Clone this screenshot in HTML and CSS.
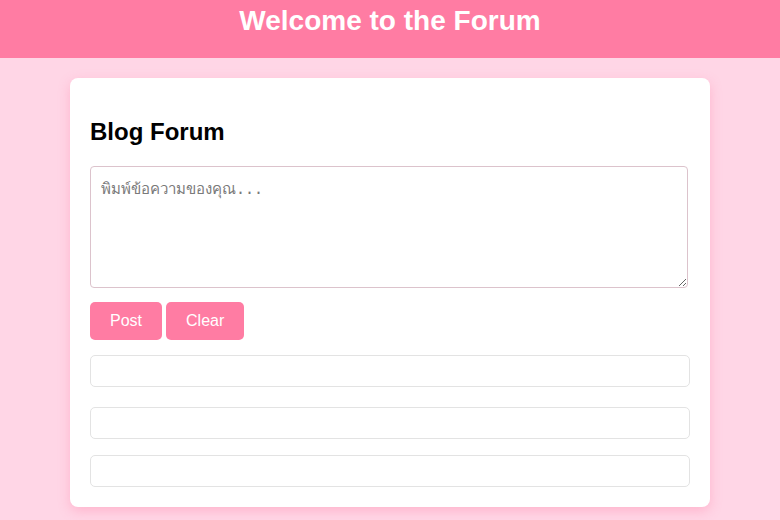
FILE: index.html
```html
<!DOCTYPE html>
<html lang="th">
<head>
<meta charset="utf-8">
<title>Forum</title>
<link rel="stylesheet" href="styles.css">
</head>
<body>
<header class="site-header">
  <h1 class="site-title">Welcome to the Forum</h1>
</header>
<main class="card">
  <h2 class="card-title">Blog Forum</h2>
  <textarea class="message" placeholder="พิมพ์ข้อความของคุณ..."></textarea>
  <div class="actions">
    <button class="btn">Post</button>
    <button class="btn">Clear</button>
  </div>
  <div class="posts">
    <div class="post post-first"></div>
    <div class="post post-second"></div>
    <div class="post post-third"></div>
  </div>
</main>
</body>
</html>
```

FILE: styles.css
```css
html, body {
  margin: 0;
  padding: 0;
}
body {
  background: #ffd6e6;
  font-family: "Liberation Sans", Arial, sans-serif;
  height: 520px;
  overflow: hidden;
}
.site-header {
  background: #ff7ca3;
  height: 58px;
  box-sizing: border-box;
  padding-top: 5px;
  text-align: center;
}
.site-title {
  margin: 0;
  color: #ffffff;
  font-size: 28px;
  line-height: 32px;
  font-weight: bold;
}
.card {
  display: block;
  width: 640px;
  box-sizing: border-box;
  margin: 20px auto 0;
  background: #ffffff;
  border-radius: 8px;
  padding: 20px;
  box-shadow: 0 4px 12px rgba(255, 120, 160, 0.35);
}
.card-title {
  margin: 20px 0 20px;
  font-size: 24px;
  line-height: 27.6px;
  font-weight: bold;
  color: #000000;
}
.message {
  display: block;
  width: 598px;
  height: 122px;
  box-sizing: border-box;
  margin: 0;
  padding: 10px;
  border: 1px solid #dcc3cc;
  border-radius: 4px;
  font-family: "DejaVu Sans Mono", "Liberation Mono", monospace;
  font-size: 15px;
  resize: vertical;
}
.message::placeholder {
  color: #7a7a7a;
}
.actions {
  display: flex;
  gap: 4px;
  margin-top: 14px;
}
.btn {
  background: #ff7ca3;
  color: #ffffff;
  border: none;
  border-radius: 5px;
  padding: 10px 20px;
  font-family: "Liberation Sans", Arial, sans-serif;
  font-size: 16px;
  line-height: 18px;
  cursor: pointer;
}
.posts {
  display: flex;
  flex-direction: column;
  margin-top: 15px;
}
.post {
  height: 32px;
  box-sizing: border-box;
  border: 1px solid #e3e3e3;
  border-radius: 5px;
  background: #ffffff;
}
.post-second {
  margin-top: 20px;
}
.post-third {
  margin-top: 16px;
}
```
